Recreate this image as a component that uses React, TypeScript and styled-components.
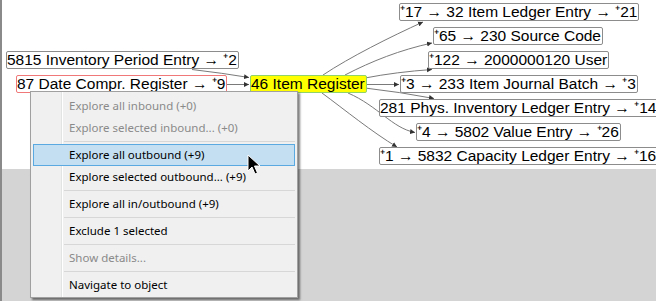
import React from "react";
import styled, { createGlobalStyle } from "styled-components";

const Global = createGlobalStyle`
  html, body { margin: 0; padding: 0; background: #ffffff; }
  body { font-family: "Liberation Sans", Arial, sans-serif; }
`;

const Screen = styled.div`
  position: relative;
  width: 656px;
  height: 301px;
  overflow: hidden;
`;

const Frame = styled.div`
  display: flex;
  flex-direction: column;
  height: 100%;
  border-left: 2px solid #8a8a8a;
  box-sizing: border-box;
`;

const Canvas = styled.div`
  position: relative;
  height: 169px;
  flex: none;
  background: #ffffff;
  overflow: hidden;
`;

const EmptyArea = styled.div`
  flex: 1;
  background: #d4d4d4;
`;

const EdgeLayer = styled.svg`
  position: absolute;
  left: 0;
  top: 0;
`;

type Kind = "plain" | "selected" | "focus";

const Node = styled.div<{ $x: number; $y: number; $kind: Kind }>`
  position: absolute;
  left: ${(p) => p.$x - 2}px;
  top: ${(p) => p.$y}px;
  height: 16px;
  padding: 0 1px 0 0;
  font-family: "Liberation Sans", Arial, sans-serif;
  font-size: 15.5px;
  line-height: 16px;
  color: #000;
  white-space: nowrap;
  border-radius: 2px;
  border: 1px solid
    ${(p) =>
      p.$kind === "selected" ? "#f07878" : p.$kind === "focus" ? "#8fd36a" : "#8c8c8c"};
  background: ${(p) => (p.$kind === "focus" ? "#ffff00" : "#ffffff")};
`;

const Menu = styled.div`
  position: absolute;
  left: 30px;
  top: 91px;
  width: 262px;
  padding: 3px 2px 1px 2px;
  border: 1px solid #a0a0a0;
  background:
    linear-gradient(
      to right,
      transparent 30px,
      #e2e3e3 30px,
      #e2e3e3 31px,
      #ffffff 31px,
      #ffffff 32px,
      transparent 32px
    ),
    #f0f0f0;
  box-shadow: 2px 2px 2px rgba(0, 0, 0, 0.5);
  font-family: "Segoe UI", "Noto Sans", sans-serif;
  font-size: 11.5px;
`;

const Item = styled.div<{ $disabled?: boolean; $hot?: boolean }>`
  height: 22px;
  box-sizing: border-box;
  line-height: 20px;
  padding-left: 35px;
  border: 1px solid ${(p) => (p.$hot ? "#5aa9e0" : "transparent")};
  background: ${(p) => (p.$hot ? "#c4dff2" : "transparent")};
  color: ${(p) => (p.$disabled ? "#8a8a8a" : "#000000")};
  white-space: nowrap;
`;

const Separator = styled.div`
  height: 1px;
  margin: 2px 0 2px 31px;
  background: #d7d7d7;
`;

const Cursor = styled.svg`
  position: absolute;
  left: 247px;
  top: 154px;
`;

const nodes: { x: number; y: number; label: string; kind: Kind }[] = [
  { x: 6, y: 51, label: "5815 Inventory Period Entry → ⁺2", kind: "plain" },
  { x: 16, y: 75, label: "87 Date Compr. Register → ⁺9", kind: "selected" },
  { x: 250, y: 75, label: "46 Item Register", kind: "focus" },
  { x: 399, y: 3, label: "⁺17 → 32 Item Ledger Entry → ⁺21", kind: "plain" },
  { x: 433, y: 27, label: "⁺65 → 230 Source Code", kind: "plain" },
  { x: 428, y: 51, label: "⁺122 → 2000000120 User", kind: "plain" },
  { x: 400, y: 75, label: "⁺3 → 233 Item Journal Batch → ⁺3", kind: "plain" },
  { x: 379, y: 99, label: "281 Phys. Inventory Ledger Entry → ⁺14", kind: "plain" },
  { x: 416, y: 123, label: "⁺4 → 5802 Value Entry → ⁺26", kind: "plain" },
  { x: 379, y: 147, label: "⁺1 → 5832 Capacity Ledger Entry → ⁺16", kind: "plain" },
];

const edges: string[] = [
  "M 192 69.5 Q 222 73 249 77.5",
  "M 226 84.5 L 249 84.5",
  "M 323 75 C 350 57, 390 37, 423 22",
  "M 345 75 C 372 61, 400 50, 432 43",
  "M 365 78 Q 396 72 432 69.5",
  "M 365 84.5 L 399 84.5",
  "M 365 88 Q 400 92 434 98.5",
  "M 348 93 C 378 106, 392 128, 415 132.5",
  "M 322 93 C 345 110, 372 132, 397 147",
];

type MenuEntry = { label: string; disabled?: boolean; hot?: boolean } | "sep";

const menu: MenuEntry[] = [
  { label: "Explore all inbound (+0)", disabled: true },
  { label: "Explore selected inbound... (+0)", disabled: true },
  "sep",
  { label: "Explore all outbound (+9)", hot: true },
  { label: "Explore selected outbound... (+9)" },
  "sep",
  { label: "Explore all in/outbound (+9)" },
  "sep",
  { label: "Exclude 1 selected" },
  "sep",
  { label: "Show details...", disabled: true },
  "sep",
  { label: "Navigate to object" },
];

export default function App() {
  return (
    <Screen>
      <Global />
      <Frame>
        <Canvas>
          <EdgeLayer width={654} height={169} viewBox="2 0 654 169">
            <defs>
              <marker
                id="arrow"
                markerWidth="6"
                markerHeight="6"
                refX="5"
                refY="3"
                orient="auto"
                markerUnits="userSpaceOnUse"
              >
                <path d="M0,0.5 L5,3 L0,5.5 z" fill="#333333" />
              </marker>
            </defs>
            {edges.map((d, i) => (
              <path
                key={i}
                d={d}
                fill="none"
                stroke="#7a7a7a"
                strokeWidth={1}
                markerEnd="url(#arrow)"
              />
            ))}
          </EdgeLayer>
          {nodes.map((n, i) => (
            <Node key={i} $x={n.x} $y={n.y} $kind={n.kind}>
              {n.label}
            </Node>
          ))}
        </Canvas>
        <EmptyArea />
      </Frame>
      <Menu>
        {menu.map((m, i) =>
          m === "sep" ? (
            <Separator key={i} />
          ) : (
            <Item key={i} $disabled={m.disabled} $hot={m.hot}>
              {m.label}
            </Item>
          )
        )}
      </Menu>
      <Cursor width="14" height="22" viewBox="0 0 14 22">
        <path
          d="M1,1 L1,17 L5,13 L8,20 L10.5,19 L7.5,12 L13,12 Z"
          fill="#000"
          stroke="#fff"
          strokeWidth="1"
          strokeLinejoin="round"
        />
      </Cursor>
    </Screen>
  );
}
